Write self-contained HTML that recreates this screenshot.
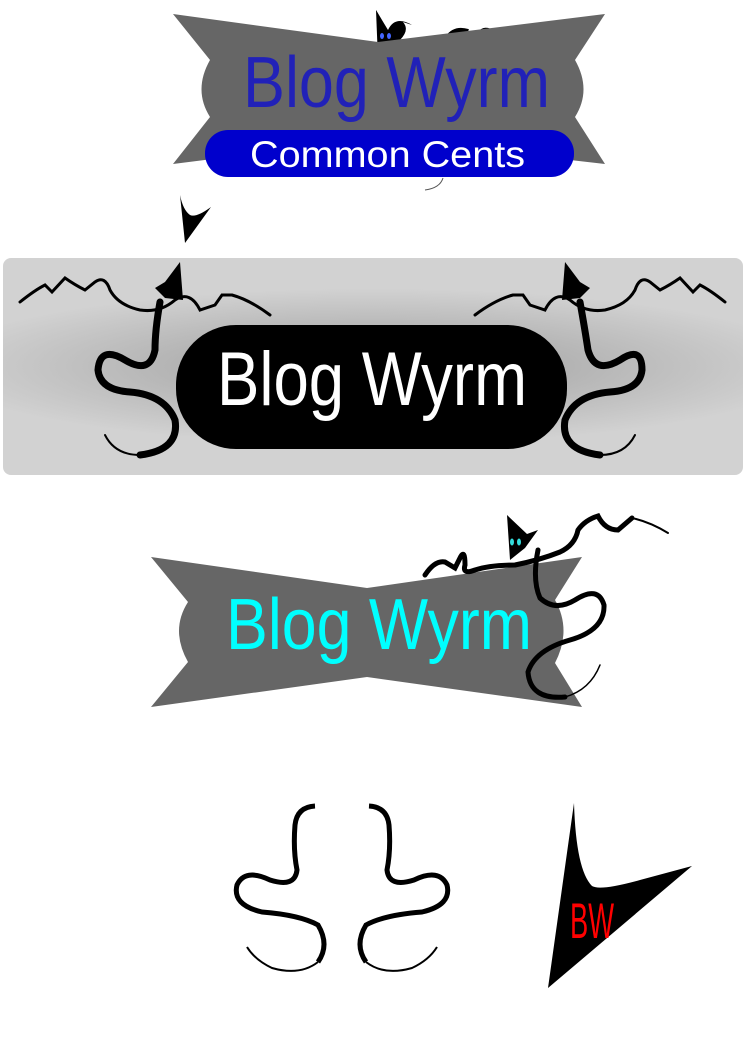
<!DOCTYPE html>
<html><head><meta charset="utf-8"><style>html,body{margin:0;padding:0;background:#fff}svg{display:block}</style></head>
<body>
<svg width="745" height="1053" viewBox="0 0 745 1053" xmlns="http://www.w3.org/2000/svg">
<defs>
<radialGradient id="g" cx="50%" cy="50%" r="60%" fx="50%" fy="50%" gradientTransform="translate(0.5,0.5) scale(1,0.6) translate(-0.5,-0.5)">
<stop offset="0" stop-color="#9c9c9c"/><stop offset="1" stop-color="#d2d2d2"/></radialGradient>
</defs>

<!-- top dragon hints -->
<path d="M376 10 L384 42 L400 40 Q410 30 403 22 L412 25 Q395 15 388 30 Z" fill="#000"/>
<path d="M376 10 L378 60 L395 45 Z" fill="#000"/>
<path d="M448 38 Q455 28 468 32 M480 34 Q485 28 492 33" stroke="#000" stroke-width="6" fill="none"/>
<!-- top bowtie -->
<path d="M173 14 L378 42 L605 14 L575 60 Q592 90 575 117 L605 164 L378 138 L173 164 L210 117 Q193 90 210 60 Z" fill="#666"/>
<ellipse cx="382" cy="36" rx="2" ry="3" fill="#4466ff"/><ellipse cx="389" cy="36" rx="2" ry="3" fill="#4466ff"/>
<text x="243" y="107" textLength="307" lengthAdjust="spacingAndGlyphs" font-family="Liberation Sans, sans-serif" font-size="72" fill="#2121b8">Blog Wyrm</text>
<rect x="205" y="130" width="369" height="47" rx="23" fill="#0000cc"/>
<text x="250" y="167" textLength="275" lengthAdjust="spacingAndGlyphs" font-family="Liberation Sans, sans-serif" font-size="37" fill="#fff">Common Cents</text>
<path d="M443 178 Q440 188 425 190" stroke="#555" stroke-width="1" fill="none"/>
<!-- small BW -->
<path d="M180 195 L185 243 L211 207 Q196 218 190 215 Q183 210 180 195 Z" fill="#000"/>

<!-- middle banner -->
<rect x="3" y="258" width="740" height="217" rx="8" fill="url(#g)"/>
<g fill="none" stroke="#000" stroke-linecap="round">
<path d="M20 302 Q35 290 45 285 L52 292 L65 278 Q75 285 85 290 L95 282 Q105 275 110 290 Q118 305 140 310 Q160 313 175 300 Q190 290 200 310 L215 305 L222 295 L232 295 Q250 300 270 315" stroke-width="3"/>
<path d="M160 302 Q155 330 155 350 Q150 375 125 360 Q100 345 98 370 Q100 390 130 392 Q165 395 175 420 Q180 450 140 455" stroke-width="7"/>
<path d="M140 455 Q115 455 105 435" stroke-width="2"/>
<path d="M725 302 Q710 290 700 285 L693 292 L680 278 Q670 285 660 290 L650 282 Q640 275 635 290 Q627 305 605 310 Q585 313 570 300 Q555 290 545 310 L530 305 L523 295 L513 295 Q495 300 475 315" stroke-width="3"/>
<path d="M580 302 Q585 330 588 350 Q595 375 620 360 Q642 345 642 370 Q640 390 610 392 Q575 395 565 420 Q560 450 600 455" stroke-width="7"/>
<path d="M600 455 Q625 455 635 435" stroke-width="2"/>
</g>
<path d="M180 262 L183 300 L165 298 L155 288 L165 282 Z" fill="#000"/>
<path d="M565 262 L562 300 L580 298 L590 288 L580 282 Z" fill="#000"/>
<rect x="176" y="325" width="391" height="124" rx="60" fill="#000"/>
<text x="217" y="405" textLength="310" lengthAdjust="spacingAndGlyphs" font-family="Liberation Sans, sans-serif" font-size="76" fill="#fff">Blog Wyrm</text>

<!-- third bowtie -->
<path d="M151 557 L367 588 L582 557 L555 600 Q572 630 555 663 L582 707 L367 677 L151 707 L188 662 Q170 630 188 602 Z" fill="#666"/>
<text x="226" y="649" textLength="306" lengthAdjust="spacingAndGlyphs" font-family="Liberation Sans, sans-serif" font-size="72" fill="#00ffff">Blog Wyrm</text>
<g fill="none" stroke="#000" stroke-linecap="round">
<path d="M425 575 Q435 560 445 562 L455 568 L460 558 Q465 548 465 565 Q462 575 475 570 Q490 565 515 565 Q540 560 560 552 Q575 545 578 530 Q585 520 598 516 Q605 530 618 530 L632 518" stroke-width="5"/>
<path d="M632 518 Q650 522 668 533" stroke-width="2"/>
<path d="M538 550 Q532 580 540 598 Q555 612 575 600 Q598 585 604 605 Q605 630 570 640 Q535 650 528 672 Q530 700 565 697" stroke-width="5"/>
<path d="M565 697 Q590 690 600 665" stroke-width="1.5"/>
</g>
<path d="M507 515 L510 560 L525 548 L538 530 L527 534 Z" fill="#000"/>
<ellipse cx="512" cy="542" rx="2" ry="3.5" fill="#33dddd"/><ellipse cx="519" cy="542" rx="2" ry="3.5" fill="#33dddd"/>

<!-- bottom S curves -->
<g fill="none" stroke="#000" stroke-linecap="butt">
<path d="M315 806 Q297 807 295 825 Q293 850 297 870 Q295 888 270 880 Q245 868 237 885 Q232 905 262 912 Q300 915 318 925 Q330 945 318 962" stroke-width="5"/>
<path d="M318 962 Q300 976 272 968 Q255 960 247 947" stroke-width="2"/>
<path d="M369 806 Q387 807 389 825 Q391 850 387 870 Q389 888 414 880 Q439 868 447 885 Q452 905 422 912 Q384 915 366 925 Q354 945 366 962" stroke-width="5"/>
<path d="M366 962 Q384 976 412 968 Q429 960 437 947" stroke-width="2"/>
</g>
<!-- BW mark -->
<path d="M574 803 Q576 870 592 886 Q600 891 640 880 L692 866 L548 988 Z" fill="#000"/>
<text x="570" y="938" font-family="Liberation Sans Narrow, Liberation Sans, sans-serif" font-size="50" fill="#ff0000" textLength="44" lengthAdjust="spacingAndGlyphs">BW</text>
</svg>
</body></html>
